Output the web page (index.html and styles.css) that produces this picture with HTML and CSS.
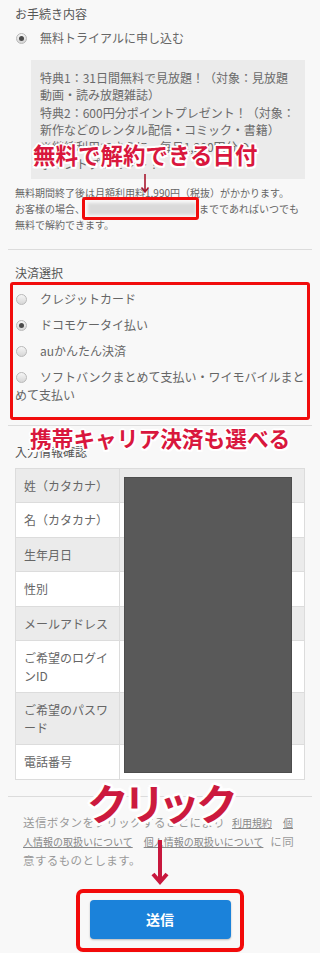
FILE: index.html
```html
<!DOCTYPE html>
<html lang="ja">
<head>
<meta charset="utf-8">
<title>お手続き</title>
<link rel="stylesheet" href="styles.css">
</head>
<body>
<div class="page">
  <section class="sec sec-first">
    <h2 class="sec-title">お手続き内容</h2>
    <div class="opt opt-trial"><span class="radio checked"></span>無料トライアルに申し込む</div>
    <div class="perks">特典1：31日間無料で見放題！（対象：見放題<br>動画・読み放題雑誌）<br>特典2：600円分ポイントプレゼント！（対象：<br>新作などのレンタル配信・コミック・書籍）<br>※継続利用でさらに、毎月1,200円分の<br>ポイントプレゼント！</div>
    <p class="note">無料期間終了後は月額利用料1,990円（税抜）がかかります。<br>お客様の場合、<span class="date"><span class="blur"></span></span>までであればいつでも<br>無料で解約できます。</p>
  </section>
  <hr class="div div-1">
  <section class="sec sec-pay">
    <h2 class="sec-title">決済選択</h2>
    <div class="pay-list">
      <div class="opt"><span class="radio"></span>クレジットカード</div>
      <div class="opt"><span class="radio checked"></span>ドコモケータイ払い</div>
      <div class="opt"><span class="radio"></span>auかんたん決済</div>
      <div class="opt"><span class="radio"></span>ソフトバンクまとめて支払い・ワイモバイルまとめて支払い</div>
      <div class="mark-box"></div>
    </div>
  </section>
  <hr class="div div-2">
  <section class="sec sec-info">
    <h2 class="sec-title">入力情報確認</h2>
    <div class="tbl-wrap">
      <table class="info">
        <tr><th>姓（カタカナ）</th><td></td></tr>
        <tr><th>名（カタカナ）</th><td></td></tr>
        <tr><th>生年月日</th><td></td></tr>
        <tr><th>性別</th><td></td></tr>
        <tr><th>メールアドレス</th><td></td></tr>
        <tr><th>ご希望のログインID</th><td></td></tr>
        <tr><th>ご希望のパスワード</th><td></td></tr>
        <tr><th>電話番号</th><td></td></tr>
      </table>
      <div class="redact"></div>
    </div>
  </section>
  <hr class="div div-3">
  <section class="sec sec-submit">
    <p class="agree">送信ボタンをクリックすることにより <a class="lnk">利用規約</a> <a class="lnk">個人情報の取扱いについて</a> <a class="lnk">個人情報の取扱いについて</a> に同意するものとします。</p>
    <div class="submit-wrap"><button class="submit" type="button">送信</button></div>
  </section>

  <div class="anno anno-date">無料で解約できる日付</div>
  <svg class="arrow arrow-1" width="10" height="20" viewBox="0 0 10 20"><path d="M5 0 V18 M1.5 13.5 L5 18 L8.5 13.5" fill="none" stroke="#a8182f" stroke-width="1.6"/></svg>
  <div class="anno anno-carrier">携帯キャリア決済も選べる</div>
  <div class="anno anno-click">クリック</div>
  <svg class="arrow arrow-2" width="18" height="46" viewBox="0 0 18 46"><path d="M9 0 V42 M2 34 L9 42 L16 34" fill="none" stroke="#c8173d" stroke-width="4" stroke-linejoin="miter"/></svg>
</div>
</body>
</html>
```
FILE: styles.css
```css
* { box-sizing: border-box; margin: 0; padding: 0; }

body {
  background: #f8f8f8;
  font-family: "Noto Sans CJK JP", "Noto Sans", sans-serif;
  color: #666;
  width: 320px;
}

.page {
  position: relative;
  padding: 5px 8px 0;
  height: 953px;
  overflow: hidden;
}

.sec { padding: 0 7px; }

.sec-title {
  font-size: 12px;
  font-weight: normal;
  line-height: 18px;
  color: #555;
}

.opt {
  font-size: 12px;
  line-height: 18px;
  color: #666;
}

.radio {
  display: inline-block;
  position: relative;
  width: 11px;
  height: 11px;
  margin: 0 13px 0 1px;
  border: 1px solid #b9b9b9;
  border-radius: 50%;
  background: linear-gradient(#f6f6f6, #d6d6d6);
  vertical-align: -1px;
}

.radio.checked::after {
  content: "";
  position: absolute;
  left: 2px;
  top: 2px;
  width: 5px;
  height: 5px;
  border-radius: 50%;
  background: #4b4b4b;
}

.opt-trial { margin-top: 6px; }

.perks {
  margin: 13px 0 0 16px;
  padding: 9px 9px 6px;
  background: #ebebeb;
  font-size: 12px;
  line-height: 17.3px;
  color: #6a6a6a;
  white-space: nowrap;
  overflow: hidden;
}

.note {
  margin-top: 6px;
  font-size: 10px;
  line-height: 16px;
  color: #666;
  white-space: nowrap;
}

.date {
  display: inline-block;
  position: relative;
  width: 112px;
  height: 12px;
  margin: 0 1px;
  vertical-align: -2px;
}

.date .blur {
  position: absolute;
  inset: 0 2px;
  background: #dadada;
  filter: blur(1.5px);
}

.date::after {
  content: "";
  position: absolute;
  left: -4px;
  right: -1px;
  top: -6px;
  bottom: -5px;
  border: 3px solid #f10d0d;
  border-radius: 3px;
}

.div {
  border: 0;
  height: 1px;
  background: #dcdcdc;
}

.div-1 { margin-top: 16px; }
.div-2 { margin-top: 21px; }
.div-3 { margin-top: 16px; }

.sec-pay { padding-top: 14px; }

.pay-list {
  position: relative;
  margin: 8px -1px 0 0;
}

.pay-list .opt + .opt { margin-top: 8px; }
.pay-list .radio { margin: 0 13px 0 1px; }

.mark-box {
  position: absolute;
  left: -5px;
  right: -4px;
  top: -8px;
  bottom: -16px;
  border: 3px solid #f10d0d;
  border-radius: 3px;
}

.sec-info { padding-top: 17px; }

.tbl-wrap {
  position: relative;
  margin-top: 7px;
}

.info {
  width: 100%;
  border-collapse: collapse;
  border: 1px solid #dcdcdc;
}

.info tr:nth-child(odd) { background: #ebebeb; }
.info tr:nth-child(even) { background: #fff; }

.info th,
.info td {
  border-bottom: 1px solid #dcdcdc;
  padding: 8px 8px;
  line-height: 17.5px;
  font-size: 12px;
}

.info th {
  width: 104px;
  text-align: left;
  font-weight: normal;
  color: #666;
  border-right: 1px solid #dcdcdc;
}

.redact {
  position: absolute;
  left: 109px;
  top: 9px;
  width: 168px;
  height: 296px;
  background: #595959;
  border: 1px solid #4d4d4d;
}

.sec-submit { padding-top: 16px; }

.agree {
  padding: 0 7px 0 8px;
  font-size: 11.5px;
  line-height: 18px;
  letter-spacing: 0.4px;
  color: #9a9a9a;
}

.lnk {
  margin: 0 4px;
  font-size: 10px;
  letter-spacing: 0;
  color: #888;
  text-decoration: underline;
}

.submit-wrap {
  position: relative;
  width: 141px;
  margin: 31px auto 0;
}

.submit-wrap::after {
  content: "";
  position: absolute;
  left: -14px;
  right: -13px;
  top: -11px;
  bottom: -13px;
  border: 4px solid #f20a0a;
  border-radius: 7px;
}

.submit {
  display: block;
  width: 141px;
  height: 39px;
  border: 0;
  border-radius: 4px;
  background: #1b82da;
  color: #fff;
  font-family: "Noto Sans CJK JP", "Noto Sans", sans-serif;
  font-size: 14px;
  font-weight: bold;
  box-shadow: 0 1px 2px rgba(0, 0, 0, 0.25);
}

.anno {
  position: absolute;
  white-space: nowrap;
  line-height: 1;
  font-weight: bold;
  color: #d9173d;
  text-shadow:
    2px 0 #fff, -2px 0 #fff, 0 2px #fff, 0 -2px #fff,
    1.5px 1.5px #fff, -1.5px 1.5px #fff, 1.5px -1.5px #fff, -1.5px -1.5px #fff;
}

.anno-date {
  left: 33px;
  top: 143px;
  font-size: 22.5px;
}

.anno-carrier {
  left: 30px;
  top: 427px;
  font-size: 21.7px;
}

.anno-click {
  left: 88px;
  top: 781px;
  font-size: 42px;
  font-feature-settings: "palt";
  color: #cc1a3e;
  text-shadow:
    3px 0 #fff, -3px 0 #fff, 0 3px #fff, 0 -3px #fff,
    2px 2px #fff, -2px 2px #fff, 2px -2px #fff, -2px -2px #fff;
}

.arrow { position: absolute; }
.arrow-1 { left: 140px; top: 174px; }
.arrow-2 { left: 151px; top: 840px; }
```
